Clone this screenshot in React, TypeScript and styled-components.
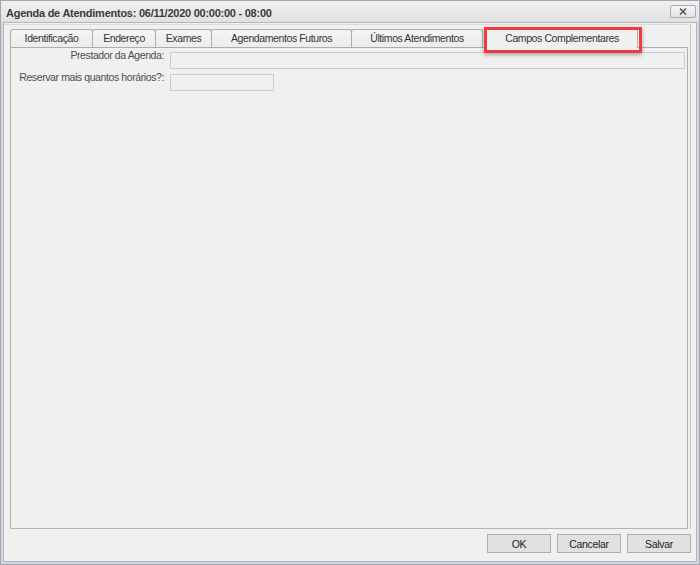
import styled, { createGlobalStyle } from 'styled-components'

const GlobalStyle = createGlobalStyle`
  html, body {
    margin: 0;
    padding: 0;
    background: #f0f0f0;
  }
  body {
    font-family: 'Liberation Sans', Arial, sans-serif;
  }
  * {
    box-sizing: border-box;
  }
`

const tabs = [
  { label: 'Identificação', width: 83 },
  { label: 'Endereço', width: 64 },
  { label: 'Exames', width: 57 },
  { label: 'Agendamentos Futuros', width: 141 },
  { label: 'Últimos Atendimentos', width: 132 },
]

const Window = styled.div`
  width: 700px;
  height: 565px;
  border: 1px solid #a4a6b0;
  background: #d5d7df;
  display: flex;
  flex-direction: column;
`

const TitleBar = styled.div`
  height: 21px;
  flex: none;
  display: flex;
  align-items: center;
  justify-content: space-between;
  padding: 0 3px 0 5px;
  background: linear-gradient(#f1f1f1, #e1e1e1);
`

const Title = styled.span`
  padding-top: 2px;
  font-size: 11px;
  font-weight: bold;
  letter-spacing: -0.25px;
  color: #3b3b3b;
`

const CloseButton = styled.button`
  width: 26px;
  height: 13px;
  padding: 0;
  border: 1px solid #a9a9a9;
  border-radius: 2px;
  background: linear-gradient(#f7f7f7, #e2e2e2);
  display: flex;
  align-items: center;
  justify-content: center;
`

const Client = styled.div`
  flex: 1;
  margin: 0 2px 2px;
  border: 1px solid #b4b6bf;
  background: #f0f0f0;
  display: flex;
  flex-direction: column;
  min-height: 0;
`

const TabArea = styled.div`
  flex: 1;
  margin: 1px 5px 0 0;
  padding: 2px 2px 0 6px;
  border-top: 1px solid #dadada;
  border-right: 1px solid #c4c4c4;
  display: flex;
  flex-direction: column;
  min-height: 0;
`

const TabStrip = styled.div`
  height: 20px;
  flex: none;
  display: flex;
  align-items: flex-start;
  position: relative;
  z-index: 1;
`

const Tab = styled.div<{ $width: number; $active?: boolean }>`
  position: relative;
  width: ${p => p.$width}px;
  height: ${p => (p.$active ? 21 : 18)}px;
  margin-top: ${p => (p.$active ? 0 : 2)}px;
  margin-left: ${p => (p.$active ? 3 : -1)}px;
  padding-top: ${p => (p.$active ? 3 : 1)}px;
  border: 1px solid #adadad;
  border-bottom: none;
  border-radius: 3px 3px 0 0;
  background: ${p => (p.$active ? '#f0f0f0' : 'linear-gradient(#f5f5f5, #ececec)')};
  font-size: 10.5px;
  letter-spacing: -0.4px;
  line-height: 15px;
  color: #333;
  text-align: center;
  white-space: nowrap;

  &:first-child {
    margin-left: 0;
  }
`

const Highlight = styled.div`
  position: absolute;
  left: -3px;
  top: -1px;
  width: 158px;
  height: 26px;
  border: 3px solid #ef3b3e;
  box-shadow: 0 2px 4px rgba(0, 0, 0, 0.3);
  pointer-events: none;
`

const Panel = styled.div`
  flex: 1;
  border: 1px solid #adadad;
  border-bottom-color: #b5b5b5;
  padding: 4px 2px 0 0;
`

const Form = styled.div`
  display: grid;
  grid-template-columns: 153px 1fr;
  column-gap: 6px;
  row-gap: 5px;
  align-items: start;
`

const Label = styled.label`
  margin-top: -3px;
  font-size: 10.5px;
  letter-spacing: -0.4px;
  line-height: 13px;
  color: #4d4d4d;
  text-align: right;
  white-space: nowrap;
`

const Field = styled.div<{ $width?: number }>`
  height: 17px;
  width: ${p => (p.$width ? `${p.$width}px` : '100%')};
  border: 1px solid #cdcdcd;
  background: #f0f0f0;
`

const Footer = styled.div`
  flex: none;
  display: flex;
  justify-content: flex-end;
  gap: 6px;
  padding: 5px 5px 8px;
`

const Button = styled.button`
  width: 64px;
  height: 19px;
  padding: 0;
  border: 1px solid #adadad;
  background: #e1e1e1;
  font-family: 'Liberation Sans', Arial, sans-serif;
  font-size: 10.5px;
  letter-spacing: -0.3px;
  color: #222;
`

export default function App() {
  return (
    <>
      <GlobalStyle />
      <Window>
        <TitleBar>
          <Title>Agenda de Atendimentos: 06/11/2020 00:00:00 - 08:00</Title>
          <CloseButton aria-label="Fechar">
            <svg width="8" height="7" viewBox="0 0 8 7">
              <path d="M1 0.5 L7 6.5 M7 0.5 L1 6.5" stroke="#5a5a5a" strokeWidth="1.6" />
            </svg>
          </CloseButton>
        </TitleBar>
        <Client>
          <TabArea>
            <TabStrip>
              {tabs.map(t => (
                <Tab key={t.label} $width={t.width}>
                  {t.label}
                </Tab>
              ))}
              <Tab $width={152} $active>
                Campos Complementares
                <Highlight />
              </Tab>
            </TabStrip>
            <Panel>
              <Form>
                <Label>Prestador da Agenda:</Label>
                <Field />
                <Label>Reservar mais quantos horários?:</Label>
                <Field $width={104} />
              </Form>
            </Panel>
          </TabArea>
          <Footer>
            <Button>OK</Button>
            <Button>Cancelar</Button>
            <Button>Salvar</Button>
          </Footer>
        </Client>
      </Window>
    </>
  )
}
